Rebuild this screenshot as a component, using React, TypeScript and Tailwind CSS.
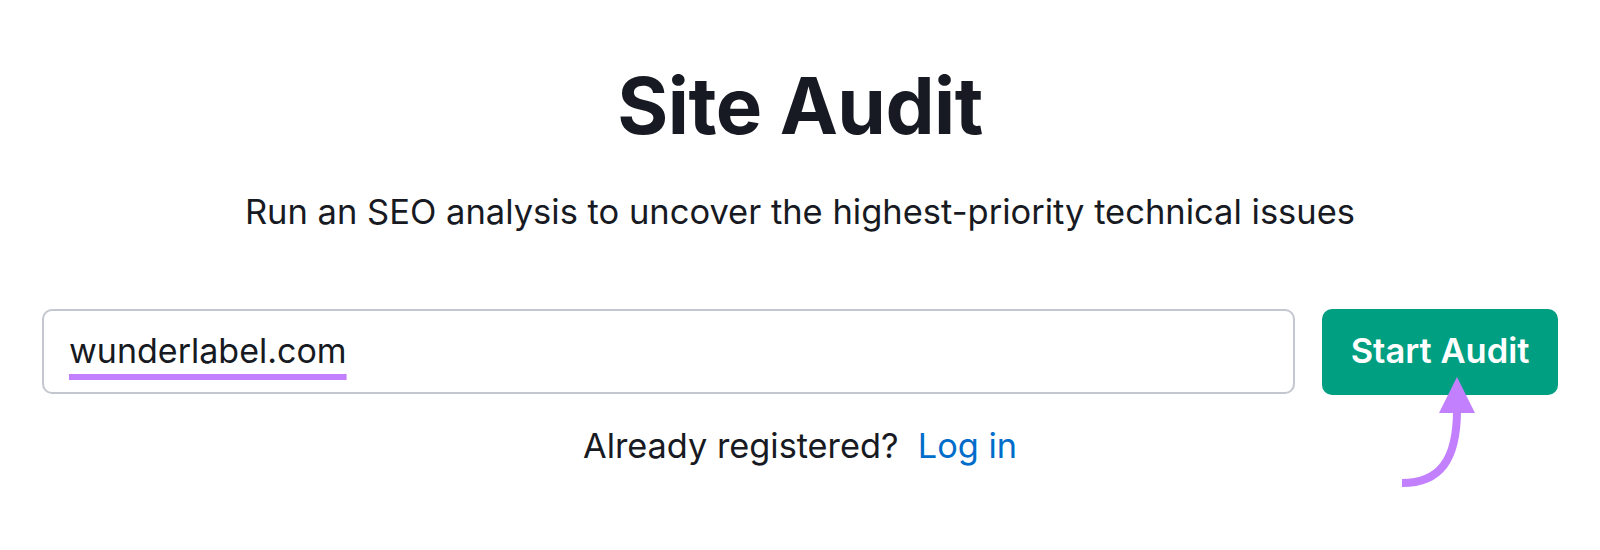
export default function App() {
  return (
    <div className="relative w-full h-[550px] bg-white flex flex-col items-center font-['Inter',sans-serif] text-[#171a22]">
      <h1 className="mt-[67px] text-[78px] leading-none font-bold tracking-[-0.5px]">Site Audit</h1>

      <p className="mt-[50px] text-[34.5px] leading-none">
        Run an SEO analysis to uncover the highest-priority technical issues
      </p>

      <div className="mt-[79px] w-full px-[42px] flex items-center gap-[27px]">
        <div className="flex-1 h-[85px] border-2 border-[#c4c7cf] rounded-[10px] flex items-center pl-[25px] pb-[2px]">
          <span className="text-[34px] leading-none underline decoration-[#c27ffe] decoration-[6px] underline-offset-[11px]">
            wunderlabel.com
          </span>
        </div>
        <button className="w-[236px] h-[86px] rounded-[10px] bg-[#009f81] text-white text-[34.5px] leading-none font-semibold">
          Start Audit
        </button>
      </div>

      <p className="mt-[34px] text-[34.3px] leading-none">
        Already registered?&nbsp; <a className="text-[#006dca]">Log in</a>
      </p>

      <svg
        className="absolute left-[1390px] top-[370px] w-[100px] h-[125px]"
        viewBox="0 0 100 125"
        fill="none"
      >
        <path d="M67 40 C67 90 50 113 12 113" stroke="#c27ffe" strokeWidth="8" />
        <path d="M67 7 L49 43 L85 43 Z" fill="#c27ffe" />
      </svg>
    </div>
  );
}
